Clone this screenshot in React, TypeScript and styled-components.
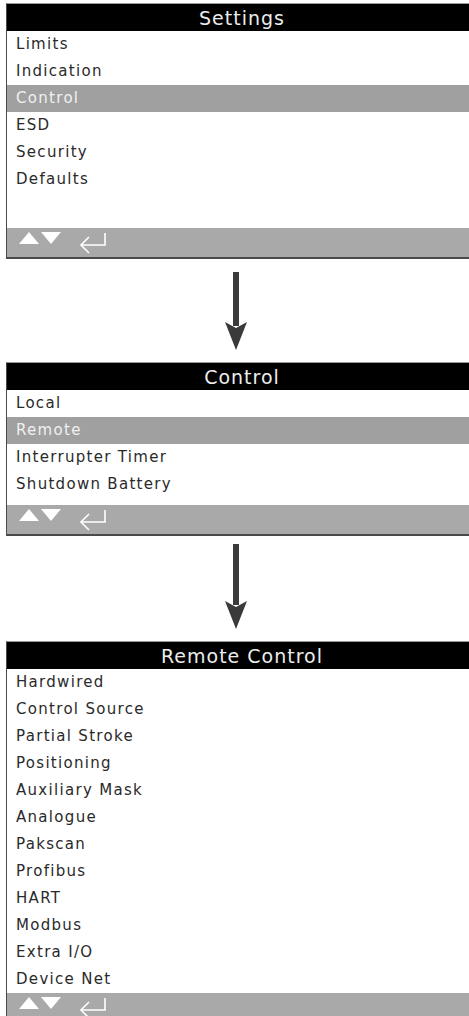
import styled, { createGlobalStyle } from "styled-components";

const GlobalStyle = createGlobalStyle`
  html, body {
    margin: 0;
    padding: 0;
    background: #fff;
    overflow: hidden;
  }
  body {
    font-family: "DejaVu Sans", "Liberation Sans", sans-serif;
  }
`;

// Whole page: the three screens stacked with arrows between
const Page = styled.div`
  display: flex;
  flex-direction: column;
  padding: 3px 0 0 6px;
  width: 469px;
  box-sizing: border-box;
`;

// One LCD screen
const Screen = styled.div`
  width: 470px;
  border: 1px solid #4a4a4a;
  border-top-color: #9a9a9a;
  border-bottom-width: 2px;
  display: flex;
  flex-direction: column;
  background: #fff;
`;

const Header = styled.div`
  height: 27px;
  background: #000;
  color: #ececec;
  font-size: 19px;
  letter-spacing: 1px;
  line-height: 28px;
  text-align: center;
`;

const MenuList = styled.div<{ $extra: number }>`
  display: flex;
  flex-direction: column;
  padding-bottom: ${(p) => p.$extra}px;
`;

const Row = styled.div<{ $selected?: boolean }>`
  height: 27px;
  line-height: 27px;
  padding-left: 9px;
  font-size: 15px;
  letter-spacing: 1.3px;
  color: ${(p) => (p.$selected ? "#f0f0f0" : "#2a2a2a")};
  background: ${(p) => (p.$selected ? "#a0a0a0" : "transparent")};
`;

const Footer = styled.div`
  height: 29px;
  background: #a9a9a9;
  display: flex;
  align-items: flex-start;
  padding-left: 12px;
`;

const ArrowRow = styled.div<{ $top: number; $bottom: number }>`
  display: flex;
  justify-content: center;
  margin: ${(p) => p.$top}px 0 ${(p) => p.$bottom}px;
  padding-right: 4px;
`;

function DownArrow({ height }: { height: number }) {
  return (
    <svg width="22" height={height} viewBox={`0 0 22 ${height}`}>
      <rect x="8" y="0" width="6" height={height - 24} fill="#3a3a3a" />
      <polygon
        points={`0,${height - 28} 11,${height - 22} 22,${height - 28} 11,${height}`}
        fill="#3a3a3a"
      />
    </svg>
  );
}

function NavKeys() {
  return (
    <svg width="96" height="27" viewBox="0 0 96 27">
      <polygon points="0,16 10,4 20,16" fill="#fff" />
      <polygon points="22,4 42,4 32,16" fill="#fff" />
      <g stroke="#fff" strokeWidth="1.6" fill="none">
        <polyline points="86,5 86,17 62,17" />
        <polyline points="70,9 62,17 70,25" />
      </g>
    </svg>
  );
}

type MenuProps = {
  title: string;
  items: string[];
  selected?: number;
  extra?: number;
};

function Menu({ title, items, selected, extra = 0 }: MenuProps) {
  return (
    <Screen>
      <Header>{title}</Header>
      <MenuList $extra={extra}>
        {items.map((item, i) => (
          <Row key={item} $selected={i === selected}>
            {item}
          </Row>
        ))}
      </MenuList>
      <Footer>
        <NavKeys />
      </Footer>
    </Screen>
  );
}

export default function App() {
  return (
    <>
      <GlobalStyle />
      <Page>
        <Menu
          title="Settings"
          items={["Limits", "Indication", "Control", "ESD", "Security", "Defaults"]}
          selected={2}
          extra={35}
        />
        <ArrowRow $top={13} $bottom={12}>
          <DownArrow height={78} />
        </ArrowRow>
        <Menu
          title="Control"
          items={["Local", "Remote", "Interrupter Timer", "Shutdown Battery"]}
          selected={1}
          extra={7}
        />
        <ArrowRow $top={8} $bottom={12}>
          <DownArrow height={85} />
        </ArrowRow>
        <Menu
          title="Remote Control"
          items={[
            "Hardwired",
            "Control Source",
            "Partial Stroke",
            "Positioning",
            "Auxiliary Mask",
            "Analogue",
            "Pakscan",
            "Profibus",
            "HART",
            "Modbus",
            "Extra I/O",
            "Device Net",
          ]}
        />
      </Page>
    </>
  );
}
